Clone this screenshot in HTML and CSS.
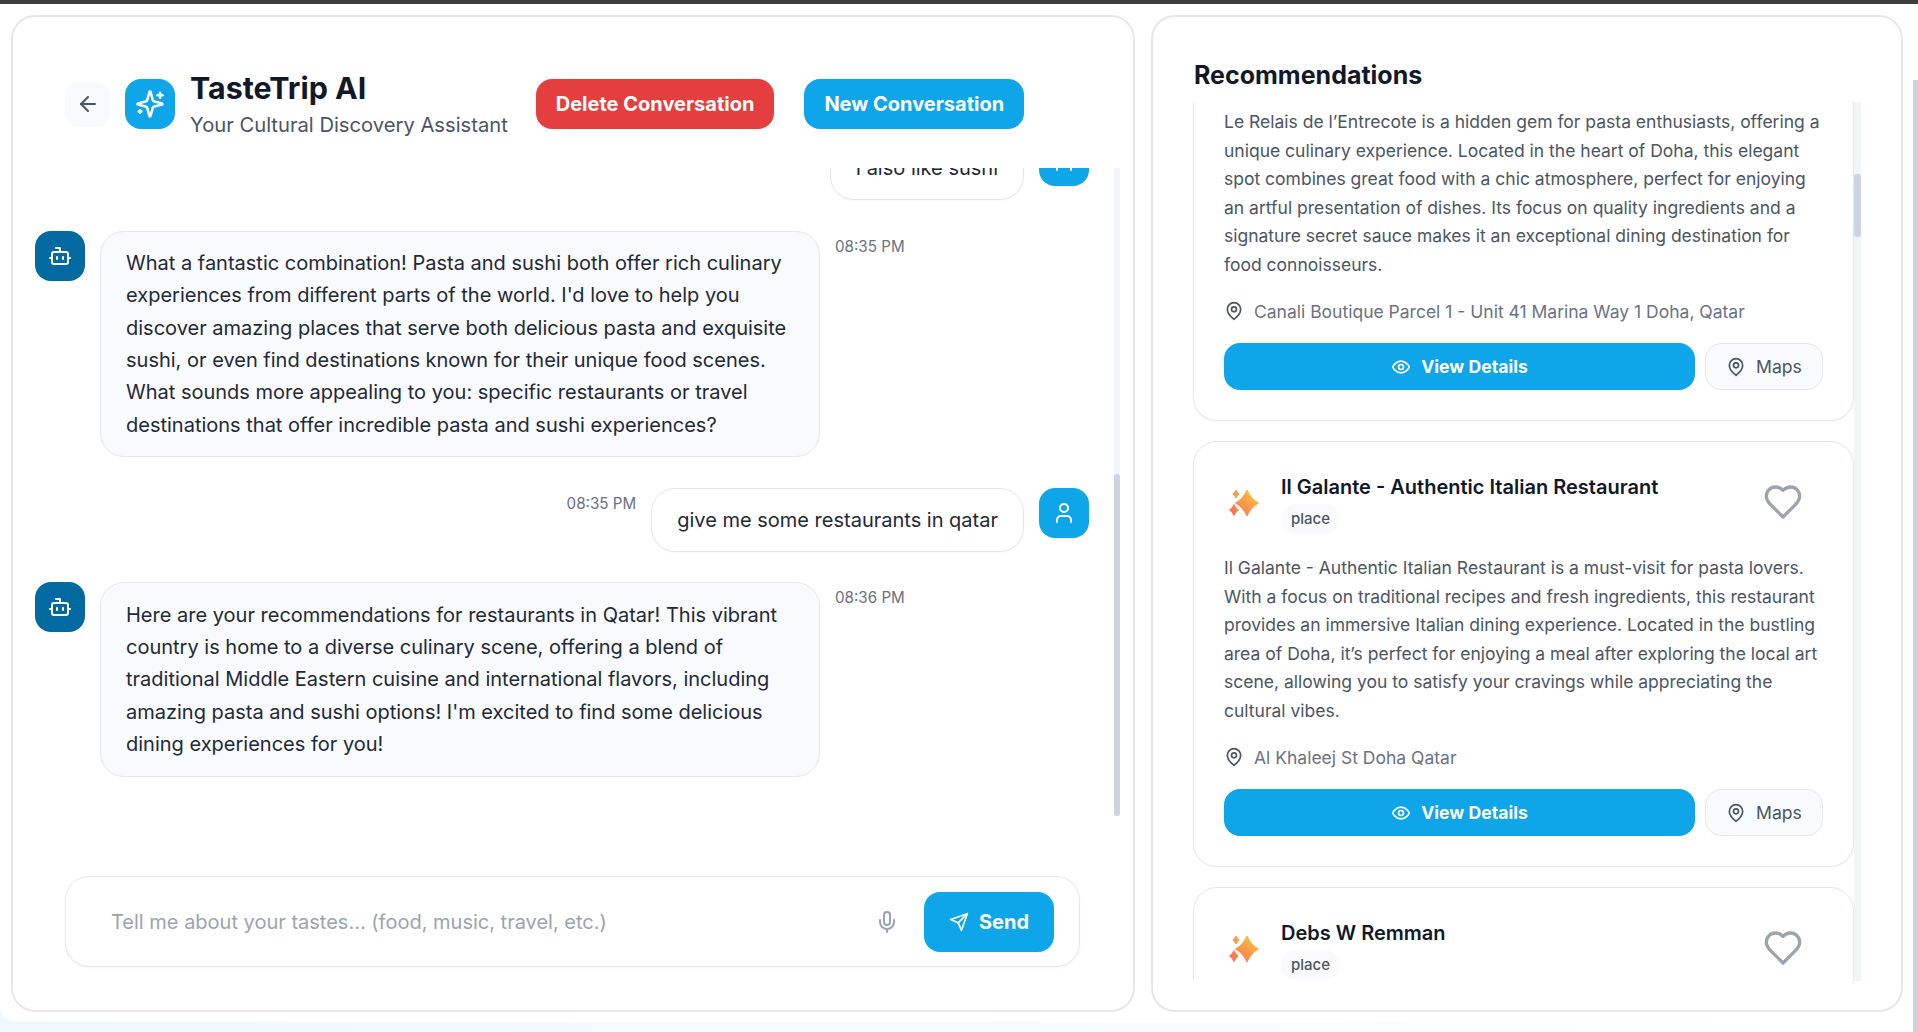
FILE: index.html
```html
<!DOCTYPE html>
<html lang="en">
<head>
<meta charset="utf-8">
<title>TasteTrip AI</title>
<link rel="stylesheet" href="styles.css">
</head>
<body>
<svg class="defs" width="0" height="0" aria-hidden="true">
  <defs>
    <linearGradient id="sparkle" gradientUnits="userSpaceOnUse" x1="26" y1="1" x2="4" y2="27">
      <stop offset="0" stop-color="#fdc53f"/>
      <stop offset="1" stop-color="#f96e50"/>
    </linearGradient>
    <symbol id="i-pin" viewBox="0 0 24 24"><path d="M20 10c0 6-8 12-8 12s-8-6-8-12a8 8 0 0 1 16 0Z"/><circle cx="12" cy="10" r="3"/></symbol>
    <symbol id="i-eye" viewBox="0 0 24 24"><path d="M2 12s3-7 10-7 10 7 10 7-3 7-10 7-10-7-10-7Z"/><circle cx="12" cy="12" r="3"/></symbol>
    <symbol id="i-heart" viewBox="0 0 24 24"><path d="M19 14c1.49-1.46 3-3.21 3-5.5A5.5 5.5 0 0 0 16.5 3c-1.76 0-3 .5-4.5 2-1.5-1.5-2.74-2-4.5-2A5.5 5.5 0 0 0 2 8.5c0 2.3 1.5 4.05 3 5.5l7 7Z"/></symbol>
    <symbol id="i-bot" viewBox="0 0 24 24"><path d="M12 8V4H8"/><rect x="4" y="8" width="16" height="12" rx="2"/><path d="M2 14h2"/><path d="M20 14h2"/><path d="M15 13v2"/><path d="M9 13v2"/></symbol>
    <symbol id="i-user" viewBox="0 0 24 24"><path d="M19 21v-2a4 4 0 0 0-4-4H9a4 4 0 0 0-4 4v2"/><circle cx="12" cy="7" r="4"/></symbol>
    <symbol id="i-spark" viewBox="0 0 31 28"><g fill="url(#sparkle)" stroke="url(#sparkle)" stroke-width="1" stroke-linejoin="round"><path d="M18 1Q22 10 29.500 14 22 18 18 27 14 18 6.500 14 14 10 18 1Z"/><path d="M7 1Q8.300 3.700 10.200 5 8.300 6.300 7 9 5.700 6.300 3.800 5 5.700 3.700 7 1Z"/><path d="M5 15.500Q6.500 19.400 9.500 21 6.500 22.600 5 26.500 3.500 22.600 .5 21 3.500 19.400 5 15.500Z"/></g></symbol>
  </defs>
</svg>
<div class="window-edge"></div>
<div class="page">
  <main class="app">
    <section class="chat-panel">
      <header class="chat-header">
        <button class="back-btn" type="button" aria-label="Back">
          <svg class="icon icon-24" viewBox="0 0 24 24"><path d="m12 19-7-7 7-7"/><path d="M19 12H5"/></svg>
        </button>
        <div class="logo">
          <svg class="icon icon-30" viewBox="0 0 24 24"><path d="M9.937 15.500A2 2 0 0 0 8.500 14.063l-6.135-1.582a.5.5 0 0 1 0-.962L8.500 9.936A2 2 0 0 0 9.937 8.500l1.582-6.135a.5.5 0 0 1 .963 0L14.063 8.500A2 2 0 0 0 15.500 9.937l6.135 1.581a.5.5 0 0 1 0 .964L15.500 14.063a2 2 0 0 0-1.437 1.437l-1.582 6.135a.5.5 0 0 1-.963 0z"/><path d="M20 3v4"/><path d="M22 5h-4"/><path d="M4 17v2"/><path d="M5 18H3"/></svg>
        </div>
        <div class="brand">
          <h1 class="brand-title">TasteTrip AI</h1>
          <p class="brand-sub">Your Cultural Discovery Assistant</p>
        </div>
        <button class="head-btn head-btn-delete" type="button">Delete Conversation</button>
        <button class="head-btn head-btn-new" type="button">New Conversation</button>
      </header>

      <div class="chat-body">
        <div class="messages">
          <div class="messages-inner">
            <div class="msg msg-user">
              <div class="avatar avatar-user"><svg class="icon icon-24"><use href="#i-user"/></svg></div>
              <div class="bubble bubble-user">I also like sushi</div>
            </div>
            <div class="msg">
              <div class="avatar avatar-bot"><svg class="icon icon-24"><use href="#i-bot"/></svg></div>
              <div class="bubble bubble-bot">What a fantastic combination! Pasta and sushi both offer rich culinary experiences from different parts of the world. I'd love to help you discover amazing places that serve both delicious pasta and exquisite sushi, or even find destinations known for their unique food scenes. What sounds more appealing to you: specific restaurants or travel destinations that offer incredible pasta and sushi experiences?</div>
              <time class="stamp">08:35 PM</time>
            </div>
            <div class="msg msg-user">
              <div class="avatar avatar-user"><svg class="icon icon-24"><use href="#i-user"/></svg></div>
              <div class="bubble bubble-user">give me some restaurants in qatar</div>
              <time class="stamp">08:35 PM</time>
            </div>
            <div class="msg">
              <div class="avatar avatar-bot"><svg class="icon icon-24"><use href="#i-bot"/></svg></div>
              <div class="bubble bubble-bot">Here are your recommendations for restaurants in Qatar! This vibrant country is home to a diverse culinary scene, offering a blend of traditional Middle Eastern cuisine and international flavors, including amazing pasta and sushi options! I'm excited to find some delicious dining experiences for you!</div>
              <time class="stamp">08:36 PM</time>
            </div>
          </div>
        </div>
        <div class="track track-chat"><div class="thumb thumb-chat"></div></div>
      </div>

      <form class="composer">
        <span class="composer-placeholder">Tell me about your tastes... (food, music, travel, etc.)</span>
        <svg class="icon icon-24 composer-mic" viewBox="0 0 24 24"><path d="M12 2a3 3 0 0 0-3 3v7a3 3 0 0 0 6 0V5a3 3 0 0 0-3-3Z"/><path d="M19 10v2a7 7 0 0 1-14 0v-2"/><path d="M12 19v3"/></svg>
        <button class="send-btn" type="button">
          <svg class="icon icon-20" viewBox="0 0 24 24"><path d="m22 2-7 20-4-9-9-4Z"/><path d="M22 2 11 13"/></svg>
          Send
        </button>
      </form>
    </section>

    <aside class="rec-panel">
      <h2 class="rec-title">Recommendations</h2>
      <div class="rec-body">
        <div class="rec-list">
          <div class="rec-list-inner">
            <article class="card card-scrolled">
              <p class="card-desc">Le Relais de l’Entrecote is a hidden gem for pasta enthusiasts, offering a unique culinary experience. Located in the heart of Doha, this elegant spot combines great food with a chic atmosphere, perfect for enjoying an artful presentation of dishes. Its focus on quality ingredients and a signature secret sauce makes it an exceptional dining destination for food connoisseurs.</p>
              <div class="card-addr"><svg class="icon icon-20"><use href="#i-pin"/></svg>Canali Boutique Parcel 1 - Unit 41 Marina Way 1 Doha, Qatar</div>
              <div class="card-actions">
                <button class="btn-view" type="button"><svg class="icon icon-20"><use href="#i-eye"/></svg>View Details</button>
                <button class="btn-maps" type="button"><svg class="icon icon-20"><use href="#i-pin"/></svg>Maps</button>
              </div>
            </article>

            <article class="card">
              <div class="card-head">
                <svg class="card-spark"><use href="#i-spark"/></svg>
                <div class="card-heading">
                  <h3 class="card-title">Il Galante - Authentic Italian Restaurant</h3>
                  <span class="tag">place</span>
                </div>
                <svg class="icon card-heart"><use href="#i-heart"/></svg>
              </div>
              <p class="card-desc">Il Galante - Authentic Italian Restaurant is a must-visit for pasta lovers. With a focus on traditional recipes and fresh ingredients, this restaurant provides an immersive Italian dining experience. Located in the bustling area of Doha, it’s perfect for enjoying a meal after exploring the local art scene, allowing you to satisfy your cravings while appreciating the cultural vibes.</p>
              <div class="card-addr"><svg class="icon icon-20"><use href="#i-pin"/></svg>Al Khaleej St Doha Qatar</div>
              <div class="card-actions">
                <button class="btn-view" type="button"><svg class="icon icon-20"><use href="#i-eye"/></svg>View Details</button>
                <button class="btn-maps" type="button"><svg class="icon icon-20"><use href="#i-pin"/></svg>Maps</button>
              </div>
            </article>

            <article class="card">
              <div class="card-head">
                <svg class="card-spark"><use href="#i-spark"/></svg>
                <div class="card-heading">
                  <h3 class="card-title">Debs W Remman</h3>
                  <span class="tag">place</span>
                </div>
                <svg class="icon card-heart"><use href="#i-heart"/></svg>
              </div>
            </article>
          </div>
        </div>
        <div class="track track-rec"><div class="thumb thumb-rec"></div></div>
      </div>
    </aside>
  </main>
  <div class="page-scroll"><div class="page-scroll-thumb"></div></div>
</div>
</body>
</html>
```

FILE: styles.css
```css
* { box-sizing: border-box; }

html, body { height: 100%; margin: 0; }

body {
  height: 1032px;
  overflow: hidden;
  display: flex;
  flex-direction: column;
  font-family: Inter, "Noto Sans", sans-serif;
  color: #111827;
  background: linear-gradient(90deg, #eff8ff 0%, #f6fbff 50%, #ffffff 100%);
}

button { font-family: inherit; border: 0; cursor: pointer; }
h1, h2, h3, p { margin: 0; }

.defs { position: absolute; }

.icon {
  fill: none;
  stroke: currentColor;
  stroke-width: 2;
  stroke-linecap: round;
  stroke-linejoin: round;
  flex: none;
}
.icon-20 { width: 20px; height: 20px; }
.icon-24 { width: 24px; height: 24px; }
.icon-30 { width: 30px; height: 30px; }

.window-edge {
  height: 4px;
  flex: none;
  background: #3d3d3d;
  box-shadow: 0 1px 3px rgba(0, 0, 0, .2);
}

.page { display: flex; flex: 1; min-height: 0; }

.app {
  flex: 1;
  height: 1018px;
  padding: 11px 10px 10px 11px;
  display: flex;
  gap: 16px;
  background: #fff;
  border-radius: 0 0 16px 16px;
}

/* Chat panel */
.chat-panel {
  width: 1124px;
  flex: none;
  display: flex;
  flex-direction: column;
  padding: 62px 13px 43px 22px;
  border: 2px solid #e5e7eb;
  border-radius: 24px;
  background: #fff;
}

.chat-header {
  display: flex;
  align-items: center;
  height: 50px;
  margin-left: 30px;
  flex: none;
}

.back-btn {
  width: 45px;
  height: 45px;
  display: flex;
  align-items: center;
  justify-content: center;
  padding: 0;
  margin-right: 15px;
  border-radius: 14px;
  background: #f8fafc;
  color: #4b5563;
}

.logo {
  width: 50px;
  height: 50px;
  margin-right: 15px;
  flex: none;
  display: flex;
  align-items: center;
  justify-content: center;
  border-radius: 16px;
  background: #0ea5e9;
  color: #fff;
}

.brand { margin-right: 28px; flex: none; }
.brand-title { font-size: 30.4px; line-height: 36px; font-weight: 700; color: #111827; }
.brand-sub { font-size: 20.2px; line-height: 27px; margin-top: 4.5px; color: #4b5563; white-space: nowrap; }

.head-btn {
  height: 50px;
  padding: 0 20px;
  border-radius: 16px;
  font-size: 20px;
  font-weight: 650;
  color: #fff;
  white-space: nowrap;
  flex: none;
}
.head-btn-delete { background: #e53e3e; margin-right: 30px; }
.head-btn-new { background: #0ea5e9; }

.chat-body {
  display: flex;
  flex: none;
  height: 648px;
  margin-top: 39px;
}

.messages { flex: 1; min-width: 0; overflow: hidden; }
.messages-inner {
  margin-top: -32px;
  padding-right: 25px;
  display: flex;
  flex-direction: column;
  gap: 30.25px;
}

.msg { display: flex; align-items: flex-start; gap: 15px; }
.msg-user { flex-direction: row-reverse; }

.avatar {
  width: 50px;
  height: 50px;
  flex: none;
  display: flex;
  align-items: center;
  justify-content: center;
  border-radius: 16px;
  color: #fff;
}
.avatar-bot { background: #0369a1; }
.avatar-user { background: #0ea5e9; }

.bubble {
  border: 1px solid #e5e7eb;
  border-radius: 24px;
  font-size: 20px;
  line-height: 32.3px;
  color: #1f2937;
}
.bubble-bot {
  width: 720px;
  padding: 15.5px 25px;
  background: #f8fafc;
}
.bubble-user {
  padding: 15px 25px;
  background: #fff;
  box-shadow: 0 1px 2px rgba(0, 0, 0, .03);
}

.stamp {
  margin-top: 4px;
  font-size: 15.2px;
  line-height: 23px;
  color: #6b7280;
  white-space: nowrap;
}

.track { flex: none; background: #f1f5f9; }
.thumb { background: #cbd5e1; border-radius: 3px; }
.track-chat { width: 6px; }
.thumb-chat { height: 342px; margin-top: 306px; }

.composer {
  display: flex;
  align-items: center;
  height: 91px;
  margin: 60px 40px 0 30px;
  padding: 0 25px 0 45px;
  border: 1px solid #e5e7eb;
  border-radius: 24px;
  background: #fff;
  box-shadow: 0 1px 3px rgba(0, 0, 0, .04);
}
.composer-placeholder { flex: 1; font-size: 20px; color: #9ca3af; }
.composer-mic { margin-right: 25px; color: #9ca3af; }

.send-btn {
  width: 130px;
  height: 60px;
  display: flex;
  align-items: center;
  justify-content: center;
  gap: 10px;
  border-radius: 16px;
  background: #0ea5e9;
  color: #fff;
  font-size: 20px;
  font-weight: 650;
}

/* Recommendations */
.rec-panel {
  flex: 1;
  min-width: 0;
  display: flex;
  flex-direction: column;
  padding: 42px 40px 29px;
  border: 2px solid #e5e7eb;
  border-radius: 24px;
  background: #fff;
}
.rec-title {
  font-size: 25px;
  line-height: 32px;
  font-weight: 700;
  color: #111827;
  margin: 0 0 11px 1px;
  height: 32px;
  flex: none;
}

.rec-body { display: flex; flex: 1; min-height: 0; }
.rec-list { flex: 1; min-width: 0; overflow: hidden; }
.rec-list-inner {
  display: flex;
  flex-direction: column;
  gap: 20px;
}

.card {
  padding: 32px 30px 30px;
  border: 1px solid #e5e7eb;
  border-radius: 24px;
  background: #fff;
  box-shadow: 0 1px 3px rgba(0, 0, 0, .04);
}
.card-scrolled { margin-top: -40px; padding-top: 45px; }
.card-scrolled .card-desc { margin-top: 0; }

.card-head { display: flex; align-items: center; }
.card-spark { width: 31px; height: 28px; flex: none; margin: 0 21px 2.5px 5px; }
.card-heading { flex: 1; min-width: 0; }
.card-title { font-size: 20px; line-height: 26px; font-weight: 600; color: #111827; }
.card-heart { width: 40px; height: 40px; margin: 0 20px 5px 0; color: #9ca3af; }

.tag {
  display: inline-block;
  margin-top: 4px;
  padding: 0 10px;
  height: 30px;
  line-height: 30px;
  border-radius: 15px;
  background: #f8fafc;
  font-size: 15px;
  font-weight: 500;
  color: #4b5563;
}

.card-desc {
  margin-top: 20px;
  font-size: 17.5px;
  line-height: 28.5px;
  color: #4b5563;
}

.card-addr {
  display: flex;
  align-items: center;
  gap: 10px;
  margin-top: 20px;
  height: 24px;
  font-size: 17.5px;
  color: #6b7280;
}
.card-addr .icon { color: #4b5563; }

.card-actions { display: flex; gap: 10px; margin-top: 20px; }

.btn-view {
  flex: 1;
  height: 47px;
  display: flex;
  align-items: center;
  justify-content: center;
  gap: 10px;
  border-radius: 16px;
  background: #0ea5e9;
  color: #fff;
  font-size: 17.6px;
  font-weight: 650;
}

.btn-maps {
  width: 118px;
  height: 47px;
  display: flex;
  align-items: center;
  justify-content: center;
  gap: 10px;
  border: 1px solid #e5e7eb;
  border-radius: 16px;
  background: #f8fafc;
  color: #4b5563;
  font-size: 17.6px;
}

.track-rec { width: 7px; }
.thumb-rec { height: 63px; margin-top: 72px; }

.page-scroll { width: 5px; flex: none; background: #fff; }
.page-scroll-thumb { height: 952px; margin-top: 76px; background: #c8d2df; }
```
